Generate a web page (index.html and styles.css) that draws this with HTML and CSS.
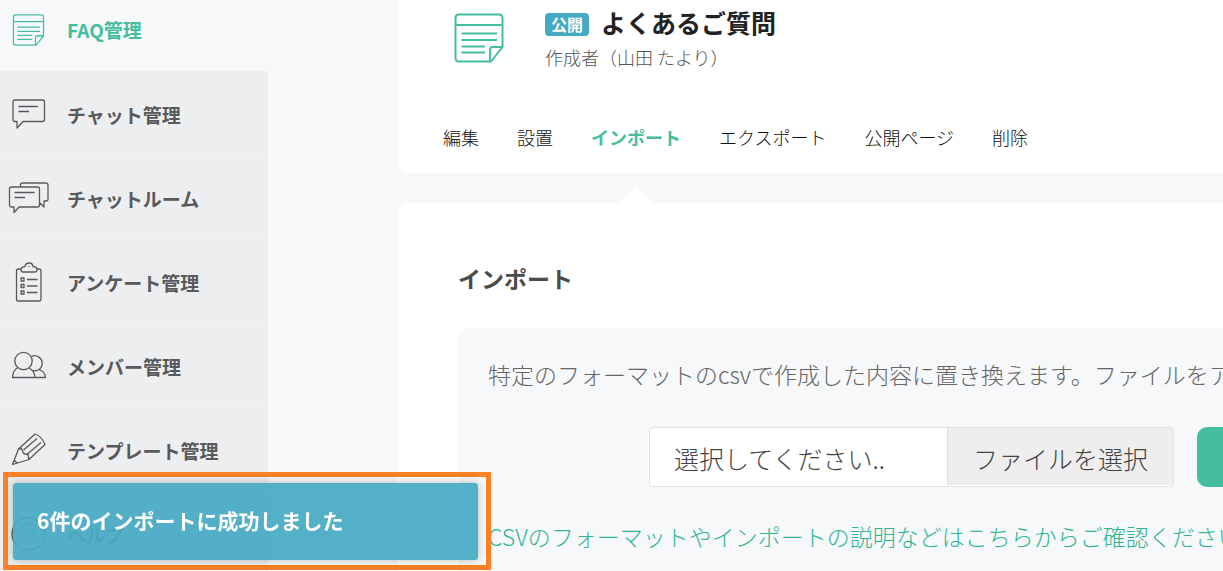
FILE: index.html
```html
<!DOCTYPE html>
<html lang="ja">
<head>
<meta charset="utf-8">
<title>よくあるご質問 - インポート</title>
<link rel="stylesheet" href="styles.css">
</head>
<body>
<svg class="defs" aria-hidden="true">
  <symbol id="note" viewBox="0 0 50 50">
    <path d="M37 48.500H5Q1.500 48.500 1.500 45V5Q1.500 1.500 5 1.500H45Q48.500 1.500 48.500 5V34L37 48.500ZM36 48.500V37Q36 34 39 34H48.500M1.500 12H48.500M7.500 20.500H43M7.500 27H43M7.500 33.500H31M7.500 39.500H31"/>
  </symbol>
</svg>
<div class="layout">
  <nav class="sidebar">
    <a class="item active" href="#"><svg class="icon"><use href="#note" x="4" y="4" width="33" height="32"/></svg>FAQ管理</a>
    <a class="item" href="#"><svg class="icon" viewBox="0 0 40 40"><path d="M6.500 6H34Q36 6 36 8V25.500Q36 27.500 34 27.500H14.500L8.500 34V27.500H6.500Q4.500 27.500 4.500 25.500V8Q4.500 6 6.500 6ZM10 12.500H29.500M10 17.500H20.500"/></svg>チャット管理</a>
    <a class="item" href="#"><svg class="icon" viewBox="0 0 40 40"><path d="M3 9H29Q31 9 31 11V27Q31 29 29 29H10.500L5.500 34.500V29H3Q1 29 1 27V11Q1 9 3 9ZM12 9V7Q12 5 14 5H37Q39.500 5 39.500 7V21Q39.500 23 37.500 23H35.500V29L31.500 25M6 14.500H26M6 19.500H16.500"/></svg>チャットルーム</a>
    <a class="item" href="#"><svg class="icon" viewBox="0 0 40 40"><path d="M12.500 7H10Q8 7 8 9V37Q8 39 10 39H30.500Q32.500 39 32.500 37V9Q32.500 7 30.500 7H28M14.500 10Q12.500 10 12.500 7.500Q12.500 5 16.500 4.500C17-.2 24-.2 24.500 4.500Q28.500 5 28.500 7.500Q28.500 10 26.500 10ZM12.500 16H15.500V19H12.500ZM12.500 22.500H15.500V25.500H12.500ZM12.500 29H15.500V32H12.500ZM18.500 17.500H29M18.500 24H29M18.500 30.500H29M20.500 4V5"/></svg>アンケート管理</a>
    <a class="item" href="#"><svg class="icon" viewBox="0 0 40 40"><circle cx="15" cy="15" r="8.700"/><path d="M23 10.500A7.500 7.500 0 1 1 22 23.500M9.500 21.500Q4.500 24 4 31.500H37Q36.500 25.500 30.500 23.500M20.500 22Q26 24.500 26.500 31.500"/></svg>メンバー管理</a>
    <a class="item" href="#"><svg class="icon" viewBox="0 0 40 40"><path d="M4 34.500L10 19L26.500 4Q33 6 36.500 14.500L20.500 29.500ZM10 19L13 18.500L15 23.500L19.500 24.500L20.500 29.500M15 20L28.500 8.500M19 24L32.500 12.500M5.500 30L9 33.500"/></svg>テンプレート管理</a>
    <a class="item" href="#"><svg class="icon" viewBox="0 0 40 40"><circle cx="20" cy="20" r="16.500"/><path d="M15 14.500C15 6.500 27 7 27 14C27 19 20.500 19 20.500 25.500M20.500 29.500V31"/></svg>ヘルプ</a>
  </nav>
  <main class="main">
    <header class="card head">
      <div class="summary">
        <svg class="note"><use href="#note" width="52" height="50"/></svg>
        <div>
          <h1 class="title"><span class="badge">公開</span>よくあるご質問</h1>
          <p class="author">作成者（山田 たより）</p>
        </div>
      </div>
      <nav class="tabs">
        <a href="#">編集</a>
        <a href="#">設置</a>
        <a class="current" href="#">インポート</a>
        <a href="#">エクスポート</a>
        <a href="#">公開ページ</a>
        <a href="#">削除</a>
      </nav>
    </header>
    <section class="card panel">
      <h2>インポート</h2>
      <div class="box">
        <p class="lead">特定のフォーマットのcsvで作成した内容に置き換えます。ファイルをアップロードしてください。</p>
        <form class="upload">
          <div class="picker">
            <input type="text" readonly aria-label="インポートするファイル" value="選択してください..">
            <button type="button">ファイルを選択</button>
          </div>
          <button class="submit" type="button" aria-label="インポート"></button>
        </form>
        <a class="guide" href="#">CSVのフォーマットやインポートの説明などはこちらからご確認ください</a>
      </div>
    </section>
  </main>
</div>
<div class="highlight">
  <div class="toast" role="status">6件のインポートに成功しました</div>
</div>
</body>
</html>
```
FILE: styles.css
```css
* { box-sizing: border-box; }

body {
  margin: 0;
  overflow: hidden;
  background: #f7f8fa;
  color: #111;
  font-family: "Noto Sans CJK JP", sans-serif;
  font-weight: 300;
}

a { color: inherit; text-decoration: none; }
h1, h2, p { margin: 0; }
button, input { font: inherit; color: inherit; }
svg { fill: none; stroke: currentColor; stroke-linejoin: round; }
.defs { position: absolute; width: 0; height: 0; }

.layout { display: flex; height: 100vh; }

.sidebar { flex: 0 0 268px; background: #edeef0; }
.item {
  display: flex;
  align-items: center;
  gap: 18px;
  height: 84px;
  padding: 3px 0 0 8px;
  border-bottom: 1px solid #f0f1f3;
  color: #58595b;
  font-size: 19px;
  font-weight: 700;
  white-space: nowrap;
}
.item.active {
  height: 71px;
  padding: 0 0 12px 8px;
  border: 0;
  background: #f7f8fa;
  color: #45be9f;
}
.icon { flex: none; width: 41px; height: 40px; stroke-width: 1.300; }
.item.active .icon { stroke-width: 2; }

.main {
  flex: 1;
  min-width: 0;
  display: flex;
  flex-direction: column;
  gap: 30px;
  padding-left: 130px;
}
.card { background: #fff; }

.head {
  display: flex;
  flex-direction: column;
  gap: 48px;
  padding: 4px 0 21px 45px;
  border-bottom-left-radius: 12px;
}
.summary { display: flex; gap: 39px; padding-left: 10px; }
.note { width: 53px; height: 50px; margin-top: 9px; color: #45be9f; stroke-width: 2; }
.title {
  display: flex;
  align-items: center;
  gap: 12px;
  color: #222;
  font-size: 25px;
  line-height: 36px;
}
.badge {
  margin-top: 4px;
  padding: 0 6px;
  border-radius: 4px;
  background: #44aac2;
  color: #fff;
  font-size: 16px;
  line-height: 23px;
}
.author { color: #555; font-size: 18px; line-height: 34px; }

.tabs {
  display: flex;
  gap: 38px;
  font-size: 18px;
  line-height: 30px;
  white-space: nowrap;
}
.current { position: relative; color: #45be9f; font-weight: 700; }
.current::after {
  content: "";
  position: absolute;
  top: 63px;
  left: 50%;
  margin-left: -18px;
  border: 18px solid transparent;
  border-top: 0;
  border-bottom-color: #fff;
}

.panel {
  flex: 1;
  padding: 58px 0 0 60px;
  border-top-left-radius: 12px;
  overflow: hidden;
}
h2 { color: #4a4a4a; font-size: 23px; line-height: 34px; }
.box {
  height: 100%;
  margin-top: 33px;
  padding: 28px 0 0 30px;
  border-top-left-radius: 12px;
  background: #f7f8fa;
  white-space: nowrap;
}
.lead { color: #666; font-size: 23px; line-height: 36px; }
.upload { display: flex; gap: 23px; padding-left: 161px; margin: 35px 0 31px; }
.picker {
  display: flex;
  flex: none;
  width: 525px;
  height: 60px;
  padding-bottom: 1px;
  border: 1px solid #e3e3e3;
  border-radius: 4px;
  background: #fff;
  color: #444;
  font-size: 25px;
}
.picker input { flex: 1; min-width: 0; padding: 2px 0 0 24px; border: 0; background: none; outline: 0; }
.picker button {
  width: 226px;
  padding: 2px 0 0;
  border: 0;
  border-left: 1px solid #ddd;
  border-radius: 0 3px 0 0;
  background: #eee;
}
.submit { flex: none; width: 200px; border: 0; border-radius: 10px; background: #45be9f; }
.guide { color: #2fb593; font-size: 23px; line-height: 36px; }

.highlight {
  position: fixed;
  bottom: 1px;
  left: 3px;
  padding: 6px 8px 5px 5px;
  border: 5px solid #ff8126;
}
.toast {
  width: 465px;
  padding: 0 24px 2px;
  border-radius: 3px;
  background: rgba(73, 171, 196, .94);
  box-shadow: 0 0 10px rgba(0, 0, 0, .25);
  color: #fff;
  font-size: 21px;
  font-weight: 700;
  line-height: 75px;
}
```
